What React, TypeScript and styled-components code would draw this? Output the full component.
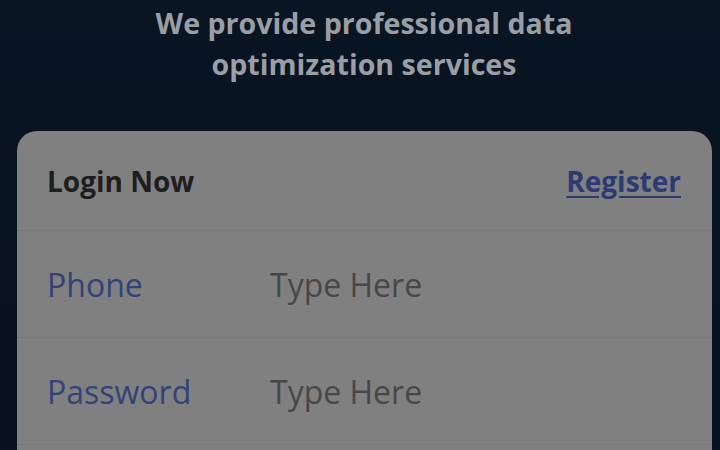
import styled, { createGlobalStyle } from 'styled-components'

const GlobalStyle = createGlobalStyle`
  html, body {
    margin: 0;
    padding: 0;
    background: #08121f;
    font-family: 'Open Sans', 'Noto Sans', Arial, sans-serif;
  }
  * { box-sizing: border-box; }
`

const Page = styled.div`
  width: 720px;
  height: 450px;
  overflow: hidden;
  background: linear-gradient(180deg, #0a1523 0%, #07111d 100%);
  padding: 2px 0 0 8px;
`

const Slogan = styled.h1`
  margin: 0;
  text-align: center;
  font-size: 28.6px;
  line-height: 41px;
  font-weight: 700;
  color: #9a9ea5;
`

const Card = styled.div`
  margin: 47px 8px 0 9px;
  padding-bottom: 60px;
  background: #808080;
  border-radius: 20px;
  overflow: hidden;
`

const Header = styled.div`
  display: flex;
  align-items: center;
  justify-content: space-between;
  height: 100px;
  padding: 0 31px 0 30px;
  border-bottom: 1px solid #767676;
`

const Title = styled.span`
  font-size: 28px;
  font-weight: 700;
  color: #1e1e1e;
`

const RegisterLink = styled.a`
  font-size: 28px;
  font-weight: 700;
  color: #2c3b74;
  text-decoration: underline;
  text-underline-offset: 4px;
  cursor: pointer;
`

const Row = styled.label`
  display: flex;
  align-items: center;
  height: 107px;
  padding-left: 30px;
  border-bottom: 1px solid #767676;
`

const Label = styled.span`
  width: 223px;
  font-size: 32px;
  color: #32437a;
`

const Field = styled.input`
  flex: 1;
  border: none;
  outline: none;
  background: transparent;
  font-family: inherit;
  font-size: 32px;
  color: #333;
  padding: 0;
  &::placeholder {
    color: #474747;
  }
`

const fields = [
  { label: 'Phone', type: 'tel' },
  { label: 'Password', type: 'password' },
]

export default function App() {
  return (
    <Page>
      <GlobalStyle />
      <Slogan>
        We provide professional data
        <br />
        optimization services
      </Slogan>
      <Card>
        <Header>
          <Title>Login Now</Title>
          <RegisterLink>Register</RegisterLink>
        </Header>
        {fields.map((f) => (
          <Row key={f.label}>
            <Label>{f.label}</Label>
            <Field type={f.type} placeholder='Type Here' />
          </Row>
        ))}
      </Card>
    </Page>
  )
}
